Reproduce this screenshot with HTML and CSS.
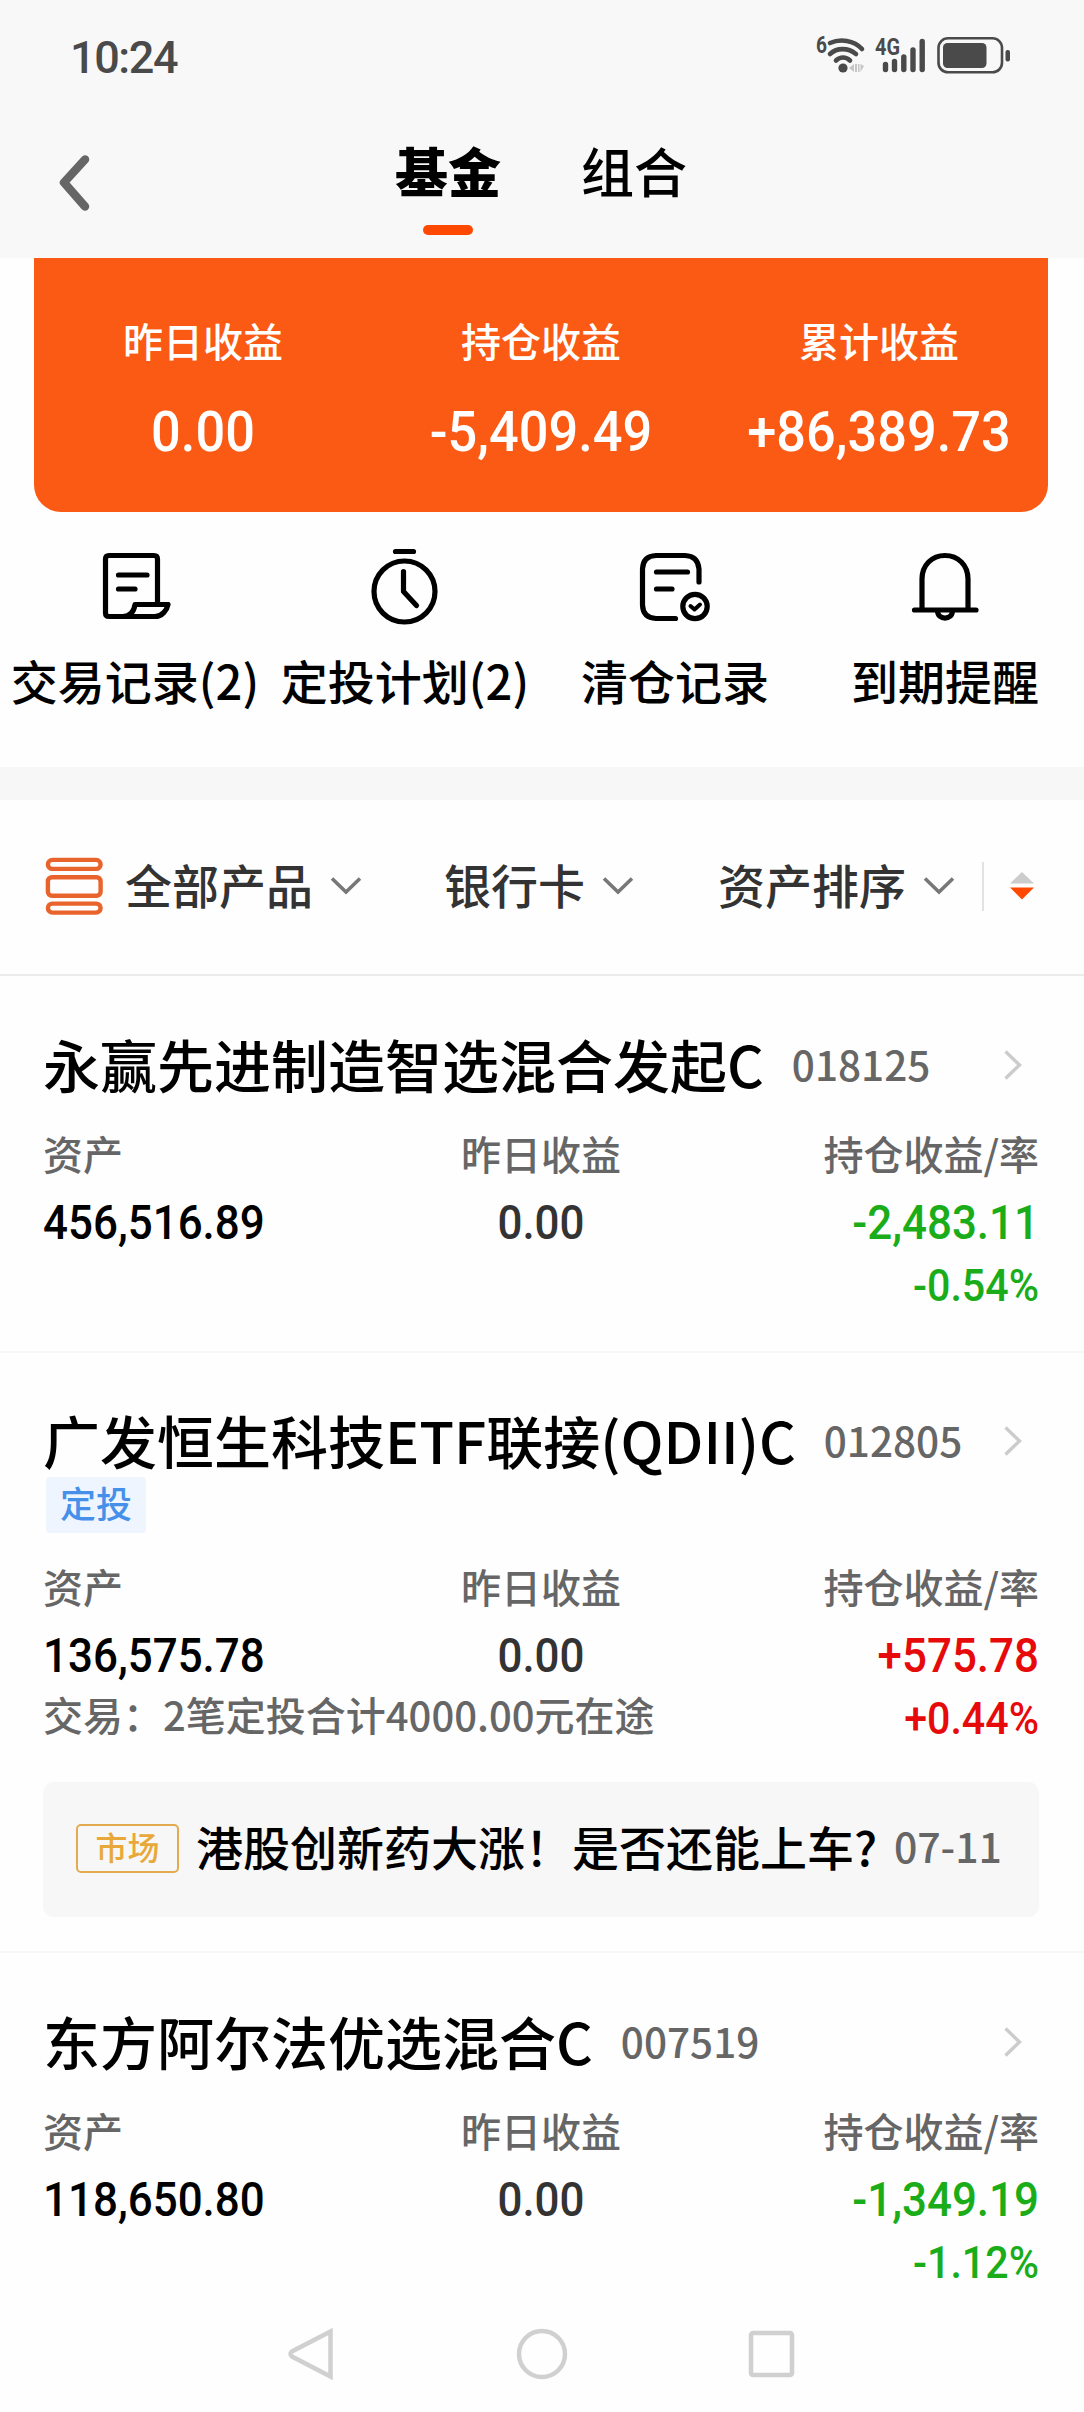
FILE: index.html
```html
<!DOCTYPE html>
<html lang="zh-CN">

<head>
    <meta charset="UTF-8">
    <meta name="viewport" content="width=device-width, initial-scale=1.0">
    <title>基金</title>
    <link rel="stylesheet" href="styles.css">
</head>

<body>
    <div class="header">
        <div class="statusbar">
            <span class="time">10:24</span>
            <svg class="statusicons" width="200" height="44" viewBox="0 0 200 44">
                <text x="4" y="20" class="icontext" textLength="11" lengthAdjust="spacingAndGlyphs">6</text>
                <g fill="none" stroke="#4a4a4a" stroke-width="4.6" stroke-linecap="round">
                    <path d="M18 10 C28 5.500 42 7 50 16" />
                    <path d="M18 21 C25 14.500 36 14.500 44 21" />
                    <path d="M24 27.500 C28 23.500 34 23.500 38 27.500" />
                </g>
                <circle cx="31" cy="35" r="4.600" fill="#4a4a4a" />
                <path d="M37 35 L42 31 V39 Z M43 31 H45 V39 H43 Z M46 31 H47.500 V39 H46 Z M48.500 31 L52 33 L48.500 39 Z" fill="#c6c6c6" />
                <text x="63" y="21.500" class="icontext" textLength="25" lengthAdjust="spacingAndGlyphs">4G</text>
                <g stroke="#4a4a4a" stroke-width="5.400" stroke-linecap="round">
                    <path d="M73.500 31.500 V36.500 M82.500 28.500 V36.500 M91.800 24 V36.500 M101 17 V36.500 M110.200 8.500 V36.500" />
                </g>
                <rect x="126.500" y="5.300" width="63.500" height="34" rx="9.500" fill="none" stroke="#4a4a4a" stroke-width="2.600" />
                <rect x="131" y="10" width="43.500" height="25" rx="4.500" fill="#4a4a4a" />
                <rect x="193.500" y="17" width="4.500" height="11.500" rx="2" fill="#4a4a4a" />
            </svg>
        </div>
        <div class="navbar">
            <svg class="back" width="34" height="60" viewBox="0 0 34 60">
                <path d="M28 6.500 L7 29.500 L28 53.500" fill="none" stroke="#666" stroke-width="8.500" stroke-linecap="round" stroke-linejoin="round" />
            </svg>
            <div class="tabs">
                <span class="tab active">基金</span>
                <span class="tab">组合</span>
            </div>
        </div>
    </div>

    <div class="summary">
        <div class="summaryitem">
            <p class="summarylabel">昨日收益</p>
            <p class="summaryvalue">0.00</p>
        </div>
        <div class="summaryitem">
            <p class="summarylabel">持仓收益</p>
            <p class="summaryvalue">-5,409.49</p>
        </div>
        <div class="summaryitem">
            <p class="summarylabel">累计收益</p>
            <p class="summaryvalue">+86,389.73</p>
        </div>
    </div>

    <div class="actions">
        <div class="action">
            <svg width="80" height="80" viewBox="0 0 80 80" fill="none" stroke="#000" stroke-width="5.200" stroke-linecap="round" stroke-linejoin="round">
                <path d="M62.500 54 V11 Q62.500 7.500 59 7.500 H14 Q10.500 7.500 10.500 11 V65 Q10.500 68.500 14 68.500 H60 C67 68.500 72 62 73 56.500 H40 C39 64 35 68 28 68.500" />
                <path d="M23.500 27 H52 M23.500 41 H40" />
            </svg>
            <span>交易记录(2)</span>
        </div>
        <div class="action">
            <svg width="80" height="80" viewBox="0 0 80 80" fill="none" stroke="#000" stroke-width="5.200" stroke-linecap="round" stroke-linejoin="round">
                <path d="M30.500 3.500 H48.500 M38.500 23.500 V43.500 L51.500 57.500" />
                <ellipse cx="39.500" cy="43.500" rx="30.500" ry="30.500" />
            </svg>
            <span>定投计划(2)</span>
        </div>
        <div class="action">
            <svg width="80" height="80" viewBox="0 0 80 80" fill="none" stroke="#000" stroke-width="5.200" stroke-linecap="round" stroke-linejoin="round">
                <path d="M64 34 V21 Q63 8 50 7.500 H21 Q8 8 7.500 21 V57 Q8 70 21 70.500 H40.500" />
                <path d="M21.500 24 H52.500 M21.500 41 H37" />
                <circle cx="60" cy="58.500" r="12.200" />
                <path d="M55.500 58 L59.500 61.500 L65 56.500" stroke-width="4" />
            </svg>
            <span>清仓记录</span>
        </div>
        <div class="action">
            <svg width="80" height="80" viewBox="0 0 80 80" fill="none" stroke="#000" stroke-width="5.200" stroke-linecap="round" stroke-linejoin="round">
                <path d="M17 60 V31 C17 17 27 7.500 40 7.500 C53 7.500 63 17 63 31 V60" />
                <path d="M9.500 62 H71 M32.500 63 C33 72.500 47 72.500 47.500 63" />
            </svg>
            <span>到期提醒</span>
        </div>
    </div>

    <div class="filters">
        <svg class="producticon" width="60" height="60" viewBox="0 0 60 60" fill="none" stroke="#e9642c" stroke-width="4.400">
            <rect x="3.900" y="3.900" width="52.700" height="9" rx="4.500" />
            <rect x="3.900" y="21.200" width="52.700" height="18.600" rx="4" />
            <rect x="3.900" y="47.600" width="52.700" height="9" rx="4.500" />
        </svg>
        <span class="filter all">全部产品
            <svg width="32" height="20" viewBox="0 0 32 20"><path d="M2 2.500 L16 16 L30 2.500" /></svg>
        </span>
        <span class="filter card">银行卡
            <svg width="32" height="20" viewBox="0 0 32 20"><path d="M2 2.500 L16 16 L30 2.500" /></svg>
        </span>
        <span class="filter">资产排序
            <svg width="32" height="20" viewBox="0 0 32 20"><path d="M2 2.500 L16 16 L30 2.500" /></svg>
        </span>
        <span class="sort">
            <svg width="24" height="28" viewBox="0 0 24 28">
                <path d="M12 0 L24 11.500 H0 Z" fill="#ccc" />
                <path d="M0 15.500 H24 L12 27.500 Z" fill="#ff4800" />
            </svg>
        </span>
    </div>

    <div class="fund">
        <div class="fundtitle">
            <span class="name">永赢先进制造智选混合发起C</span>
            <span class="code">018125</span>
            <svg class="arrow" width="20" height="32" viewBox="0 0 20 32"><path d="M2.500 2.500 L16.500 16 L2.500 29.500" /></svg>
        </div>
        <div class="stats">
            <span class="label">资产</span>
            <span class="label">昨日收益</span>
            <span class="label">持仓收益/率</span>
            <span class="value total">456,516.89</span>
            <span class="value">0.00</span>
            <span class="value down">-2,483.11</span>
            <span class="note"></span>
            <span class="rate down">-0.54%</span>
        </div>
    </div>

    <div class="fund second">
        <div class="fundtitle">
            <span class="name">广发恒生科技ETF联接(QDII)C</span>
            <span class="code">012805</span>
            <svg class="arrow" width="20" height="32" viewBox="0 0 20 32"><path d="M2.500 2.500 L16.500 16 L2.500 29.500" /></svg>
        </div>
        <span class="plantag">定投</span>
        <div class="stats">
            <span class="label">资产</span>
            <span class="label">昨日收益</span>
            <span class="label">持仓收益/率</span>
            <span class="value total">136,575.78</span>
            <span class="value">0.00</span>
            <span class="value up">+575.78</span>
            <span class="note">交易：2笔定投合计4000.00元在途</span>
            <span class="rate up">+0.44%</span>
        </div>
        <div class="news">
            <span class="newstag">市场</span>
            <span class="newstitle">港股创新药大涨！是否还能上车?</span>
            <span class="newsdate">07-11</span>
        </div>
    </div>

    <div class="fund third">
        <div class="fundtitle">
            <span class="name">东方阿尔法优选混合C</span>
            <span class="code">007519</span>
            <svg class="arrow" width="20" height="32" viewBox="0 0 20 32"><path d="M2.500 2.500 L16.500 16 L2.500 29.500" /></svg>
        </div>
        <div class="stats">
            <span class="label">资产</span>
            <span class="label">昨日收益</span>
            <span class="label">持仓收益/率</span>
            <span class="value total">118,650.80</span>
            <span class="value">0.00</span>
            <span class="value down">-1,349.19</span>
            <span class="note"></span>
            <span class="rate down">-1.12%</span>
        </div>
    </div>

    <div class="systemnav">
        <svg width="50" height="54" viewBox="0 0 50 54"><path d="M43.500 4.500 V49.500 L5 29.500 Q2 27 5 24.500 Z" /></svg>
        <svg width="54" height="54" viewBox="0 0 54 54"><circle cx="27" cy="27" r="23" /></svg>
        <svg width="50" height="54" viewBox="0 0 50 54"><rect x="4" y="6" width="41" height="42" rx="2" /></svg>
    </div>
</body>

</html>
```
FILE: styles.css
```css
* {
    box-sizing: border-box;
}

body {
    margin: 0;
    width: 1084px;
    height: 2412px;
    overflow: hidden;
    background-color: #fefefe;
    font-family: "Noto Sans CJK SC", sans-serif;
    font-weight: 500;
    color: #000;
}

p {
    margin: 0;
}

.header {
    height: 258px;
    background-color: #f8f8f8;
}

.statusbar {
    height: 114px;
    padding: 33px 72px 0 70px;
    display: flex;
    justify-content: space-between;
}

.statusicons {
    overflow: visible;
}

.time {
    font-family: Roboto, sans-serif;
    font-size: 45px;
    font-weight: 500;
    line-height: 49px;
    letter-spacing: -1.4px;
    color: #4a4a4a;
}

.icontext {
    font-family: Roboto, sans-serif;
    font-size: 24px;
    font-weight: 700;
    fill: #4a4a4a;
}

.navbar {
    height: 144px;
    padding-left: 57px;
    display: flex;
}

.back {
    margin-top: 39px;
}

.tabs {
    display: flex;
    gap: 80px;
    margin-left: 304px;
    padding-top: 20px;
}

.tab {
    height: 101px;
    font-size: 53px;
    line-height: 72px;
}

.active {
    font-weight: 900;
}

.active::after {
    content: "";
    display: block;
    width: 50px;
    height: 10px;
    margin: 19px auto 0;
    border-radius: 5px;
    background-color: #ff4800;
}

.summary {
    height: 254px;
    margin: 0 36px 0 34px;
    padding-top: 57px;
    display: grid;
    grid-template-columns: repeat(3, 1fr);
    text-align: center;
    color: #fff;
    background-color: #fb5a14;
    border-radius: 0 0 27px 27px;
}

.summarylabel {
    font-size: 40px;
    line-height: 50px;
}

.summaryvalue {
    margin-top: 31px;
    font-family: Roboto, sans-serif;
    font-size: 56px;
    line-height: 72px;
    transform: scaleX(.935);
}

.actions {
    height: 255px;
    width: 1080px;
    padding-top: 36px;
    display: grid;
    grid-template-columns: repeat(4, 1fr);
}

.action {
    display: flex;
    flex-direction: column;
    align-items: center;
    font-size: 47px;
    line-height: 60px;
    white-space: nowrap;
}

.action span {
    margin-top: 22px;
}

.filters {
    height: 209px;
    padding: 0 50px 2px 44px;
    display: flex;
    align-items: center;
    border-top: 33px solid #f7f7f7;
    border-bottom: 2px solid #ececec;
}

.filter {
    display: flex;
    align-items: center;
    gap: 17px;
    padding-bottom: 5px;
    font-size: 47px;
    color: #333;
    line-height: 60px;
}

.filter svg {
    margin-top: 5px;
    fill: none;
    stroke: #777;
    stroke-width: 3.6;
}

.producticon {
    margin-right: 21px;
}

.all {
    margin-right: 82px;
}

.card {
    margin-right: 84px;
}

.sort {
    height: 49px;
    margin-left: auto;
    padding-left: 26px;
    display: flex;
    align-items: center;
    border-left: 2px solid #e2e2e2;
}

.fund {
    height: 377px;
    padding: 54px 45px 0 43px;
    border-bottom: 2px solid #f7f7f7;
}

.fundtitle {
    display: flex;
    align-items: center;
    height: 66px;
    line-height: 66px;
}

.name {
    font-size: 57px;
}

.code {
    margin-top: 2px;
    margin-left: 28px;
    font-size: 40.5px;
    color: #666;
}

.arrow {
    margin-top: 4px;
    margin-left: auto;
    margin-right: 16px;
    fill: none;
    stroke: #ccc;
    stroke-width: 3.4;
}

.stats {
    margin-top: 32px;
    display: grid;
    grid-template-columns: repeat(3, 1fr);
    grid-template-rows: 63px 62px 65px;
    text-align: center;
}

.stats span:nth-child(3n + 1) {
    text-align: left;
    transform-origin: left;
}

.stats span:nth-child(3n),
.stats .rate {
    text-align: right;
    transform-origin: right;
}

.label {
    font-size: 40px;
    line-height: 50px;
    color: #666;
}

/* tall narrow digits */
.value,
.rate {
    font-family: Roboto, sans-serif;
    font-size: 48px;
    line-height: 63px;
    color: #333;
    transform: scaleX(.915);
}

.rate {
    font-size: 45px;
    line-height: 65px;
}

.total {
    color: #000;
}

.down {
    color: #1aad19;
}

.up {
    color: #e60a0a;
}

.note {
    grid-column: span 2;
    font-size: 40px;
    line-height: 56px;
    color: #666;
}

.second {
    height: 600px;
    padding-top: 53px;
}

.plantag {
    display: block;
    width: 100px;
    height: 56px;
    margin: 5px 0 0 3px;
    font-size: 36px;
    line-height: 50px;
    text-align: center;
    color: #4690ea;
    background-color: #eef5ff;
    border-radius: 4px;
}

.second .stats {
    margin-top: 28px;
}

.news {
    height: 135px;
    margin-top: 31px;
    padding: 0 37px 4px 33px;
    display: flex;
    align-items: center;
    background-color: #f7f7f7;
    border-radius: 11px;
    white-space: nowrap;
}

.newstag {
    width: 103px;
    height: 49px;
    margin-top: 2px;
    font-size: 32px;
    line-height: 41px;
    text-align: center;
    color: #e8a93a;
    border: 2px solid #e3ab50;
    border-radius: 5px;
}

.newstitle {
    margin-top: -5px;
    margin-left: 17px;
    font-size: 47px;
}

.newsdate {
    margin-top: -5px;
    margin-left: auto;
    font-size: 41px;
    color: #666;
}

.third {
    height: 367px;
    border-bottom: 0;
}

.systemnav {
    display: flex;
    padding: 7px 0 0 287px;
    gap: 178px;
}

.systemnav svg {
    fill: none;
    stroke: #d0d0d0;
    stroke-width: 4.5;
}
```
